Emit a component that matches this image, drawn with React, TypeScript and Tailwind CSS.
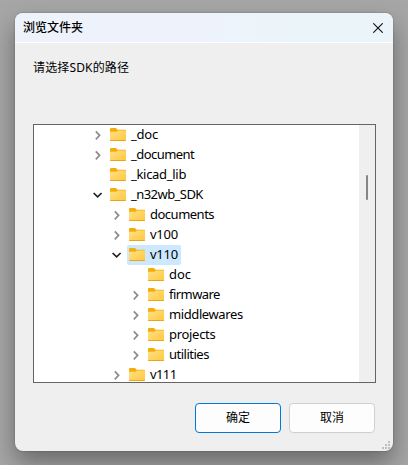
import React from 'react';

type Expansion = 'open' | 'closed' | 'none';

interface FolderNode {
  name: string;
  level: 0 | 1 | 2;
  expansion: Expansion;
  tracking: string;
  selected?: boolean;
}

const folders: FolderNode[] = [
  { name: '_doc', level: 0, expansion: 'closed', tracking: 'tracking-[-0.2px]' },
  { name: '_document', level: 0, expansion: 'closed', tracking: 'tracking-[-0.55px]' },
  { name: '_kicad_lib', level: 0, expansion: 'none', tracking: 'tracking-[-0.3px]' },
  { name: '_n32wb_SDK', level: 0, expansion: 'open', tracking: 'tracking-[-0.55px]' },
  { name: 'documents', level: 1, expansion: 'closed', tracking: 'tracking-[-0.5px]' },
  { name: 'v100', level: 1, expansion: 'closed', tracking: 'tracking-[-0.25px]' },
  { name: 'v110', level: 1, expansion: 'open', tracking: 'tracking-[-0.25px]', selected: true },
  { name: 'doc', level: 2, expansion: 'none', tracking: 'tracking-[-0.1px]' },
  { name: 'firmware', level: 2, expansion: 'closed', tracking: 'tracking-[-0.55px]' },
  { name: 'middlewares', level: 2, expansion: 'closed', tracking: 'tracking-[-0.4px]' },
  { name: 'projects', level: 2, expansion: 'closed', tracking: 'tracking-[-0.3px]' },
  { name: 'utilities', level: 2, expansion: 'closed', tracking: 'tracking-[-0.5px]' },
  { name: 'v111', level: 1, expansion: 'closed', tracking: 'tracking-[-0.6px]' },
];

const indent = { 0: 'pl-[57px]', 1: 'pl-[76px]', 2: 'pl-[95px]' };

function Chevron({ expansion }: { expansion: Expansion }) {
  return (
    <svg className="h-5 w-[17px] shrink-0" viewBox="0 0 17 20" fill="none">
      {expansion === 'closed' && <path d="M4.8 6.3 8.6 10.3 4.8 14.3" stroke="#8c8c8c" strokeWidth="1.7" />}
      {expansion === 'open' && <path d="M2.6 8 6.6 11.8 10.6 8" stroke="#222" strokeWidth="1.7" />}
    </svg>
  );
}

function FolderIcon() {
  return (
    <svg className="h-5 w-4 shrink-0" viewBox="0 0 16 20">
      <defs>
        <linearGradient id="folder" x1="0" y1="0" x2="1" y2="1">
          <stop offset="0" stopColor="#ffe08a" />
          <stop offset="1" stopColor="#ffc83a" />
        </linearGradient>
      </defs>
      <path d="M0 4Q0 3 1 3H6L7.6 4.8H15Q16 4.8 16 5.8V14H0Z" fill="#f3ae0b" />
      <path d="M0 6.7H6.4L8 5.4H15.2Q16 5.4 16 6.2V15.2Q16 16 15.2 16H.8Q0 16 0 15.2Z" fill="url(#folder)" />
      <path d="M0 15H16Q16 16 15 16H1Q0 16 0 15Z" fill="#e9a51b" />
    </svg>
  );
}

function FolderRow({ node }: { node: FolderNode }) {
  return (
    <li className={`flex h-5 shrink-0 items-center ${indent[node.level]}`}>
      <Chevron expansion={node.expansion} />
      <div className={`flex h-5 items-center rounded-[2px] pr-[3px] pl-[2px] ${node.selected ? 'bg-[#cce8ff]' : ''}`}>
        <FolderIcon />
        <span className={`ml-[5px] pb-[2px] text-[13px] leading-[18px] whitespace-pre ${node.tracking}`}>{node.name}</span>
      </div>
    </li>
  );
}

export default function App() {
  return (
    <div className="h-[465px] w-[408px] overflow-hidden bg-[#a6a6a6] pt-[13px] pl-[15px] font-['Noto_Sans','Noto_Sans_CJK_SC',sans-serif] text-black">
      <div className="flex h-[438px] w-[378px] flex-col overflow-hidden rounded-[8px] bg-[#efefef] shadow-[0_0_2px_rgba(0,0,0,0.3),0_12px_24px_rgba(0,0,0,0.36)]">
        <header className="flex h-[30px] shrink-0 items-center justify-between border-b border-white bg-linear-to-r from-[#eef3fb] from-50% to-[#ebf4f8] to-75% pr-[10px] pl-2">
          <h1 className="text-[12px] leading-4 font-medium">浏览文件夹</h1>
          <svg className="h-[10px] w-[10px]" viewBox="0 0 10 10" fill="none" stroke="#111" strokeWidth="1.1">
            <path d="M.3.3 9.7 9.7M9.7.3.3 9.7" />
          </svg>
        </header>
        <p className="mt-[17px] ml-[18px] h-16 text-[12px] leading-4 tracking-[0.15px]">请选择SDK的路径</p>
        <div className="ml-[18px] flex h-[259px] w-[343px] shrink-0 border border-[#646464] bg-white">
          <ul className="flex h-full flex-1 flex-col overflow-hidden">
            {folders.map((node) => (
              <FolderRow key={node.name} node={node} />
            ))}
          </ul>
          <div className="w-4 bg-[#efefef] pt-[50px] pl-[7px]">
            <div className="h-[25px] w-[2px] rounded-[1px] bg-[#858585]" />
          </div>
        </div>
        <footer className="mt-5 flex gap-2 pl-[180px] text-[12px]">
          <button className="h-[30px] w-[86px] rounded-[4px] border border-[#0078d4] bg-[#fdfdfd]">确定</button>
          <button className="h-[30px] w-[86px] rounded-[4px] border border-[#d0d0d0] bg-[#fdfdfd]">取消</button>
        </footer>
        <svg className="mt-auto mr-[3px] mb-[2px] ml-auto h-2 w-2 shrink-0" viewBox="0 0 8 8" fill="#bfbfbf">
          <path d="M6 0h2v2h-2zM3 3h2v2h-2zM6 3h2v2h-2zM0 6h2v2h-2zM3 6h2v2h-2zM6 6h2v2h-2z" />
        </svg>
      </div>
    </div>
  );
}
